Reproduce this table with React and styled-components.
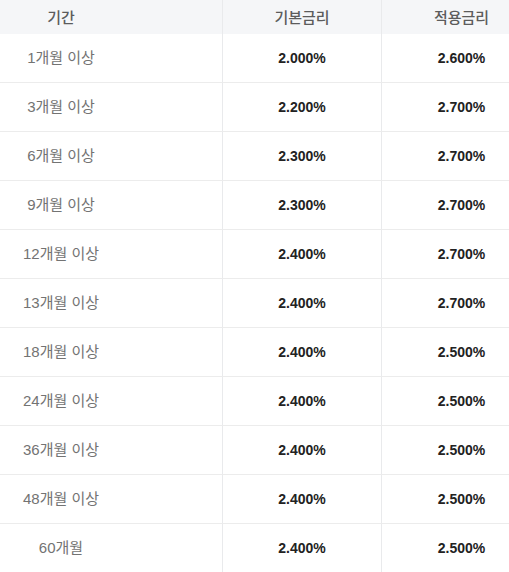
import React from "react";
import styled, { createGlobalStyle } from "styled-components";

const Global = createGlobalStyle`
  html, body { margin: 0; padding: 0; background: #fff; }
  body { font-family: "Liberation Sans", "Noto Sans CJK KR", Arial, sans-serif; }
`;

const Table = styled.div`
  width: 509px;
  overflow: hidden;
`;

const Grid = styled.div`
  display: grid;
  grid-template-columns: 222px 159px 160px;
  width: 541px;
`;

const HeadCell = styled.div`
  height: 34px;
  background: #f5f6f8;
  display: flex;
  align-items: center;
  justify-content: center;
  font-size: 15px;
  font-weight: 500;
  color: #5c5c5c;
  box-sizing: border-box;
  padding-bottom: 2px;
  padding-right: ${(p) => (p.$first ? "100px" : "0")};
  border-left: ${(p) => (p.$first ? "none" : "1px solid #e9eaec")};
`;

const Cell = styled.div`
  height: 49px;
  box-sizing: border-box;
  border-bottom: 1px solid #ececec;
  border-left: ${(p) => (p.$first ? "none" : "1px solid #e9eaec")};
  display: flex;
  align-items: center;
  justify-content: center;
  padding-right: ${(p) => (p.$first ? "100px" : "0")};
  padding-bottom: ${(p) => (p.$first ? "3px" : "0")};
  font-size: ${(p) => (p.$first ? "15px" : "14px")};
  color: ${(p) => (p.$first ? "#737373" : "#222")};
  font-weight: ${(p) => (p.$first ? 400 : 700)};
`;

const rows = [
  ["1개월 이상", "2.000%", "2.600%"],
  ["3개월 이상", "2.200%", "2.700%"],
  ["6개월 이상", "2.300%", "2.700%"],
  ["9개월 이상", "2.300%", "2.700%"],
  ["12개월 이상", "2.400%", "2.700%"],
  ["13개월 이상", "2.400%", "2.700%"],
  ["18개월 이상", "2.400%", "2.500%"],
  ["24개월 이상", "2.400%", "2.500%"],
  ["36개월 이상", "2.400%", "2.500%"],
  ["48개월 이상", "2.400%", "2.500%"],
  ["60개월", "2.400%", "2.500%"],
];

export default function App() {
  return (
    <>
      <Global />
      <Table>
        <Grid>
          <HeadCell $first>기간</HeadCell>
          <HeadCell>기본금리</HeadCell>
          <HeadCell>적용금리</HeadCell>
          {rows.map((r) => (
            <React.Fragment key={r[0]}>
              <Cell $first>{r[0]}</Cell>
              <Cell>{r[1]}</Cell>
              <Cell>{r[2]}</Cell>
            </React.Fragment>
          ))}
        </Grid>
      </Table>
    </>
  );
}
